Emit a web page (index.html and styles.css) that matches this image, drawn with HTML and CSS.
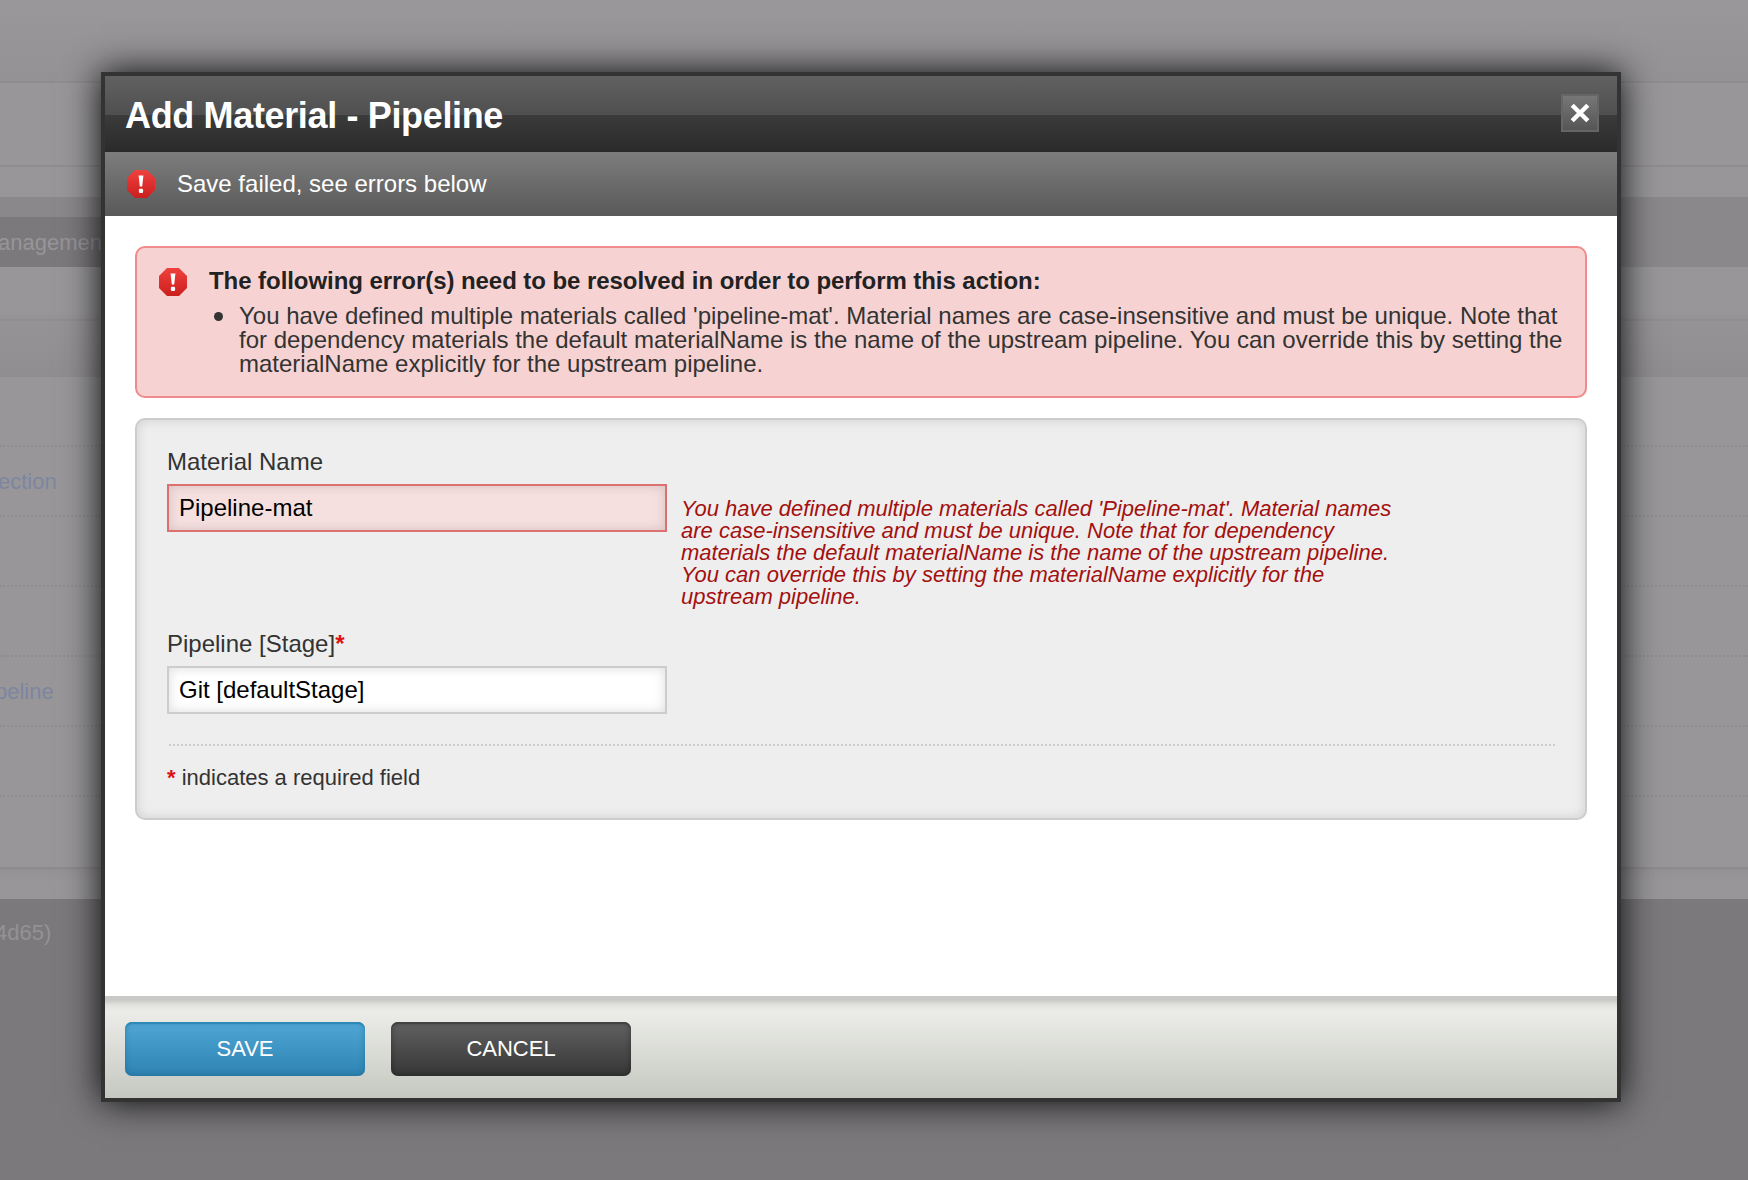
FILE: index.html
```html
<!DOCTYPE html>
<html lang="en">
<head>
<meta charset="utf-8">
<title>Add Material - Pipeline</title>
<link rel="stylesheet" href="styles.css">
</head>
<body>
<svg class="defs" width="0" height="0" aria-hidden="true">
  <defs>
    <linearGradient id="stop-red" x1="0" y1="0" x2="0" y2="1">
      <stop offset="0" stop-color="#ef413d"/>
      <stop offset="1" stop-color="#cb1f1f"/>
    </linearGradient>
    <symbol id="stop" viewBox="0 0 28 28">
      <path d="M8 0H20L28 8V20L20 28H8L0 20V8Z" fill="url(#stop-red)"/>
      <path d="M11.6 5.5H16.4L15.2 16.5H12.8Z" fill="#fff"/>
      <rect x="11.9" y="18.8" width="4.2" height="4.2" rx="1.2" fill="#fff"/>
    </symbol>
  </defs>
</svg>

<div class="page">
  <div class="page-top"></div>
  <div class="page-head"></div>
  <div class="page-gap"></div>
  <div class="page-tabs"><span class="page-tab">anagement</span></div>
  <div class="page-crumb"></div>
  <div class="page-subhead"></div>
  <div class="page-main">
    <div class="page-row"></div>
    <div class="page-row connection">ection</div>
    <div class="page-row"></div>
    <div class="page-row"></div>
    <div class="page-row pipeline">peline</div>
    <div class="page-row"></div>
  </div>
  <div class="page-end"></div>
  <div class="page-footer">4d65)</div>
</div>

<div class="modal" role="dialog">
  <header class="modal-title">
    <h1>Add Material - Pipeline</h1>
    <button class="close" aria-label="Close"><svg width="22" height="22" viewBox="0 0 22 22"><path d="M3.2 3.2L18.8 18.8M18.8 3.2L3.2 18.8" stroke="#fff" stroke-width="4.4"/></svg></button>
  </header>
  <div class="status"><svg class="icon"><use href="#stop"/></svg><span>Save failed, see errors below</span></div>
  <div class="content">
    <section class="errors">
      <svg class="icon"><use href="#stop"/></svg>
      <div class="errors-text">
        <h2>The following error(s) need to be resolved in order to perform this action:</h2>
        <div class="item"><i class="bullet"></i><p>You have defined multiple materials called 'pipeline-mat'. Material names are case-insensitive and must be unique. Note that<br>for dependency materials the default materialName is the name of the upstream pipeline. You can override this by setting the<br>materialName explicitly for the upstream pipeline.</p></div>
      </div>
    </section>
    <form class="panel">
      <label>Material Name</label>
      <div class="field">
        <div class="input invalid">Pipeline-mat</div>
        <p class="field-error">You have defined multiple materials called 'Pipeline-mat'. Material names<br>are case-insensitive and must be unique. Note that for dependency<br>materials the default materialName is the name of the upstream pipeline.<br>You can override this by setting the materialName explicitly for the<br>upstream pipeline.</p>
      </div>
      <label>Pipeline [Stage]<span class="req">*</span></label>
      <div class="input">Git [defaultStage]</div>
      <div class="rule"></div>
      <p class="note"><span class="req">*</span> indicates a required field</p>
    </form>
  </div>
  <footer class="actions">
    <button class="btn save">SAVE</button>
    <button class="btn cancel">CANCEL</button>
  </footer>
</div>
</body>
</html>
```

FILE: styles.css
```css
* { box-sizing: border-box; margin: 0; padding: 0; }

body {
  width: 1748px;
  height: 1180px;
  overflow: hidden;
  position: relative;
  font: 24px/24px "Liberation Sans", Arial, sans-serif;
  color: #333;
  background: #7b797c;
}

.defs { position: absolute; }

/* dimmed page behind the dialog */
.page { display: flex; flex-direction: column; height: 1180px; white-space: nowrap; }
.page-top { height: 83px; background: linear-gradient(#999799, #949295); border-bottom: 2px solid #8f8d90; }
.page-head { height: 84px; background: #989699; border-bottom: 2px solid #8f8d90; }
.page-gap { height: 30px; background: #989699; }
.page-tabs { height: 70px; padding-top: 20px; background: #8a888b; }
.page-tab { display: block; width: 106px; height: 50px; line-height: 51px; font-size: 22px; text-indent: -2px; color: #979599; background: #7b797c; }
.page-crumb { height: 54px; background: linear-gradient(#989699 44px, #949295); border-bottom: 2px solid #8f8d90; }
.page-subhead { height: 56px; background: linear-gradient(#959396, #8f8d90); }
.page-main { height: 490px; background: #989699; }
.page-row { height: 70px; border-bottom: 2px dotted #8f8d90; line-height: 69px; font-size: 22px; color: #7c86a0; }
.page-row.connection { text-indent: -2px; }
.page-row.pipeline { text-indent: -5px; }
.page-end { height: 32px; border-top: 2px solid #8d8b8e; background: linear-gradient(#939194, #989699 12px); }
.page-footer { flex: 1; padding-top: 22px; font-size: 22px; text-indent: -5px; color: #949295; background: #7b797c; }

.modal {
  position: absolute;
  left: 101px;
  top: 72px;
  width: 1520px;
  height: 1030px;
  display: flex;
  flex-direction: column;
  border: 4px solid #333;
  background: #fff;
  box-shadow: 0 0 34px rgba(0, 0, 0, .95);
}

.modal-title {
  height: 76px;
  padding: 0 18px 0 20px;
  display: flex;
  align-items: center;
  justify-content: space-between;
  background: linear-gradient(#616161, #4f4f4f 39px, #3b3b3b 39px, #2a2a2a);
}
h1 { padding-top: 4px; font-size: 36px; line-height: 40px; letter-spacing: -.35px; color: #fff; }
.close {
  width: 38px;
  height: 38px;
  margin-bottom: 2px;
  display: flex;
  align-items: center;
  justify-content: center;
  border: 2px solid #666;
  background: linear-gradient(#777, #555);
}

.status {
  height: 64px;
  padding-left: 22px;
  display: flex;
  align-items: center;
  gap: 22px;
  color: #fff;
  background: linear-gradient(#7d7d7d, #595959);
}
.icon { width: 28px; height: 28px; flex: none; }

.content { flex: 1; padding: 30px 30px 0; }

.errors {
  height: 152px;
  padding: 20px 22px;
  display: flex;
  gap: 22px;
  border: 2px solid #f08a8c;
  border-radius: 10px;
  background: #f6d3d2;
}
.errors-text { padding-top: 1px; white-space: nowrap; }
h2 { font-size: 24px; line-height: 24px; letter-spacing: -.06px; color: #222; }
.item { display: flex; padding: 11px 0 0 5px; gap: 16px; }
.bullet { width: 9px; height: 9px; margin-top: 8px; border-radius: 50%; background: #333; }

.panel {
  height: 402px;
  margin-top: 20px;
  padding: 28px 30px;
  border: 2px solid #ccc;
  border-radius: 10px;
  background: #eee;
  box-shadow: inset 0 0 12px rgba(0, 0, 0, .13);
  white-space: nowrap;
}
label { display: block; height: 36px; padding-top: 2px; }
.field { display: flex; gap: 14px; height: 146px; }
.input {
  width: 500px;
  height: 48px;
  padding: 9px 10px;
  line-height: 26px;
  color: #000;
  border: 2px solid #ccc;
  background: #fff;
  box-shadow: inset 0 0 12px rgba(0, 0, 0, .14);
}
.input.invalid { border-color: #dc7070; background: #f6e0df; }
.field-error { padding-top: 14px; font-size: 22px; line-height: 22px; font-style: italic; color: #a3100e; }
.req { font-weight: bold; color: #d11; }
.rule { margin: 30px 0 0 2px; width: 1386px; height: 2px; background: repeating-linear-gradient(90deg, #ccc 0 2px, transparent 2px 4px); }
.note { margin-top: 20px; font-size: 22px; }

.actions {
  height: 102px;
  padding: 26px 20px;
  display: flex;
  gap: 26px;
  background: linear-gradient(#c9cac7, #c9cac7 4px, #e2e3df 9px, #ebece7 15px, #eaebe6 20px, #c5c7c1);
}
.btn {
  width: 240px;
  height: 54px;
  border: 0;
  border-radius: 7px;
  font: 22px/24px "Liberation Sans", Arial, sans-serif;
  color: #fff;
}
.save { background: linear-gradient(#50a7d6, #2d83b1); box-shadow: inset 0 2px 1px #2c88b6, inset 0 0 6px rgba(0, 60, 100, .3); }
.cancel { background: linear-gradient(#616161, #363636); box-shadow: inset 0 2px 1px #414141, inset 0 0 6px rgba(0, 0, 0, .35); }
```
